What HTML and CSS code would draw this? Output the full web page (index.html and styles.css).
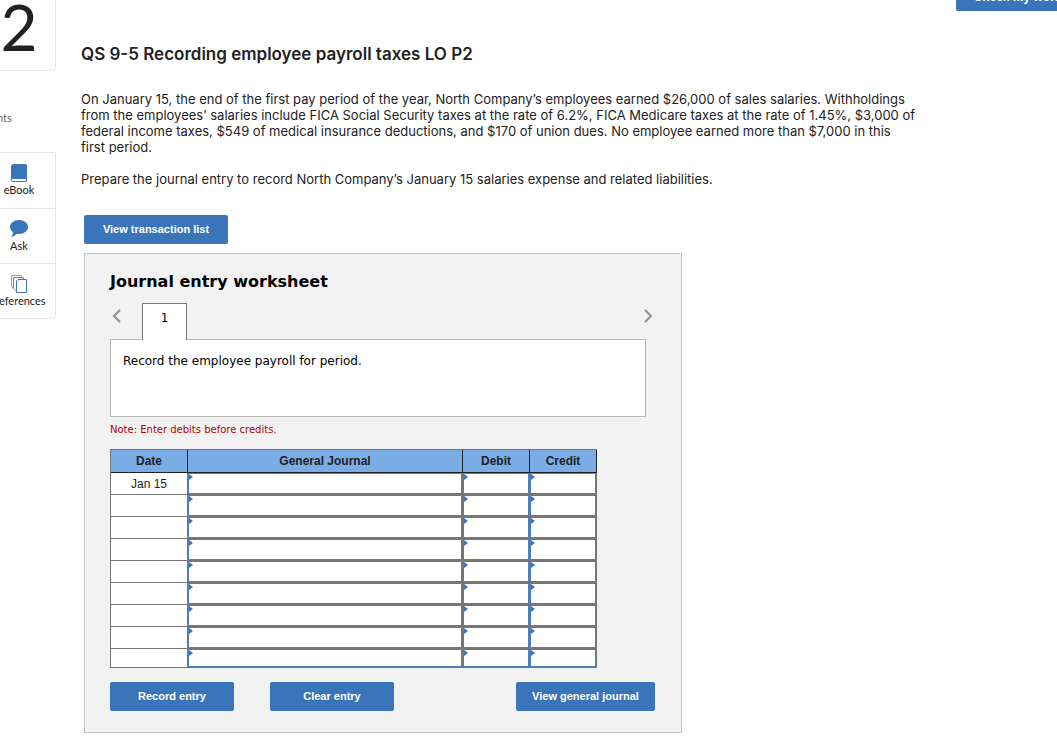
FILE: index.html
```html
<!DOCTYPE html>
<html lang="en">
<head>
    <meta charset="UTF-8">
    <meta name="viewport" content="width=device-width, initial-scale=1.0">
    <title>QS 9-5 Recording employee payroll taxes</title>
    <link rel="stylesheet" href="styles.css">
</head>
<body>
    <div class="page">
        <aside class="sidebar">
            <div class="question-number">2</div>
            <p class="points">points</p>
            <nav class="tools">
                <a href="#ebook">
                    <svg width="18" height="20" viewBox="0 0 18 20">
                        <path d="M4 1h11v14H3q-1 0-2 1V4q0-3 3-3z" fill="#3a75ba"/>
                        <path d="M16.500 2v16.500H3q-2 0-2-1.500t2-1.500h12.500V1" fill="none" stroke="#3a75ba"/>
                    </svg>
                    eBook
                </a>
                <a href="#ask">
                    <svg width="18" height="20" viewBox="0 0 18 20">
                        <path d="M9 1c5 0 9 3 9 7s-4 7-9 7q-1 0-2-.2Q4 18 1 18q2-1.500 2-4.700Q0 11 0 8c0-4 4-7 9-7z" fill="#3a75ba"/>
                    </svg>
                    Ask
                </a>
                <a href="#references">
                    <svg width="18" height="20" viewBox="0 0 18 20">
                        <g fill="#fff" stroke="#3a75ba">
                            <path d="M1.500 1.500h10v13h-8l-2-2z" stroke="#7ba3d3"/>
                            <path d="M3.500 3.500h10v13h-8l-2-2z" stroke="#5b8cc7"/>
                            <path d="M8 5.500h8.500v13h-10V7z"/>
                        </g>
                    </svg>
                    References
                </a>
            </nav>
        </aside>

        <main>
            <header>
                <button type="button" class="btn check-btn">Check my work</button>
            </header>

            <section class="question">
                <h1>QS 9-5 Recording employee payroll taxes LO P2</h1>
                <p>On January 15, the end of the first pay period of the year, North Company’s employees earned $26,000 of sales salaries. Withholdings<br>
                from the employees’ salaries include FICA Social Security taxes at the rate of 6.2%, FICA Medicare taxes at the rate of 1.45%, $3,000 of<br>
                federal income taxes, $549 of medical insurance deductions, and $170 of union dues. No employee earned more than $7,000 in this<br>
                first period.</p>
                <p>Prepare the journal entry to record North Company’s January 15 salaries expense and related liabilities.</p>
            </section>

            <button type="button" class="btn list-btn">View transaction list</button>

            <section class="worksheet">
                <h2>Journal entry worksheet</h2>
                <div class="tabs">
                    <button type="button" class="arrow" aria-label="Previous">
                        <svg width="10" height="14" viewBox="0 0 10 14"><path d="M8 1L2 7l6 6" fill="none" stroke="#8f8f8f" stroke-width="2"/></svg>
                    </button>
                    <button type="button" class="tab">1</button>
                    <button type="button" class="arrow next" aria-label="Next">
                        <svg width="10" height="14" viewBox="0 0 10 14"><path d="M2 1l6 6-6 6" fill="none" stroke="#8f8f8f" stroke-width="2"/></svg>
                    </button>
                </div>
                <div class="instruction">Record the employee payroll for period.</div>
                <p class="note">Note: Enter debits before credits.</p>

                <table class="journal">
                    <colgroup>
                        <col class="col-date">
                        <col>
                        <col class="col-amount">
                        <col class="col-amount">
                    </colgroup>
                    <thead>
                        <tr><th>Date</th><th>General Journal</th><th>Debit</th><th>Credit</th></tr>
                    </thead>
                    <tbody id="rows"></tbody>
                </table>

                <div class="actions">
                    <button type="button" class="btn">Record entry</button>
                    <button type="button" class="btn">Clear entry</button>
                    <button type="button" class="btn journal-btn">View general journal</button>
                </div>
            </section>
        </main>
    </div>

    <script>
        const dates = ['Jan 15', '', '', '', '', '', '', '', ''];
        const fields = ['General Journal', 'Debit', 'Credit'];

        document.getElementById('rows').innerHTML = dates.map((date, i) => {
            const cells = fields.map(f => `<td class="entry"><input type="text" aria-label="${f} row ${i + 1}"></td>`).join('');
            return `<tr><td>${date}</td>${cells}</tr>`;
        }).join('');
    </script>
</body>
</html>
```
FILE: styles.css
```css
* {
    box-sizing: border-box;
}

body {
    margin: 0;
    overflow: hidden;
    background-color: #fff;
    color: #222;
    font-family: Inter, "Open Sans", sans-serif;
}

/* the sheet is scrolled a little down and to the right */
.page {
    display: flex;
    margin: -18px -22px 0 -18px;
}

.sidebar {
    width: 74px;
    flex: none;
    text-align: center;
    font-family: Lato, sans-serif;
    font-size: 11px;
}

.question-number {
    height: 89px;
    border: 1px solid #e6e6e6;
    border-bottom-right-radius: 4px;
    font-size: 64px;
    line-height: 88px;
}

.points {
    margin: 39px 0 26px;
    text-align: left;
    line-height: 16px;
    color: #666;
}

.tools {
    border: 1px solid #e6e6e6;
    border-bottom-right-radius: 4px;
}

.tools a {
    display: flex;
    flex-direction: column;
    align-items: center;
    height: 55px;
    padding-top: 10px;
    color: #222;
    line-height: 14px;
    text-decoration: none;
}

.tools a + a {
    border-top: 1px solid #e6e6e6;
}

main {
    flex: 1;
    padding-left: 25px;
}

header {
    display: flex;
    justify-content: flex-end;
}

.btn {
    height: 29px;
    padding: 0 15px 2px;
    border: 0;
    border-radius: 2px;
    background-color: #3a75ba;
    color: #fff;
    font: bold 11px "Liberation Sans", Arial, sans-serif;
}

.check-btn {
    width: 123px;
    padding-bottom: 0;
    font-size: 12px;
}

.question h1 {
    margin: 32px 0 0;
    font-size: 17px;
    font-weight: 600;
    line-height: 22px;
}

.question p {
    margin: 0 0 16px;
    font-size: 13px;
    line-height: 16px;
    white-space: nowrap;
}

.question h1 + p {
    margin-top: 26px;
}

.list-btn {
    display: block;
    width: 144px;
    margin: 28px 3px 9px;
}

.worksheet {
    max-width: 598px;
    margin-left: 3px;
    padding: 17px 26px 21px 25px;
    border: 1px solid #c3c3c3;
    background-color: #f2f2f2;
}

.worksheet h2 {
    margin: 0;
    color: #000;
    font: bold 16px/22px "DejaVu Sans", Verdana, sans-serif;
}

.tabs {
    display: flex;
    align-items: flex-start;
    margin-top: 10px;
}

.arrow {
    width: 14px;
    height: 28px;
    padding: 0;
    border: 0;
    background: none;
}

.next {
    margin-left: auto;
}

.tab {
    width: 45px;
    height: 37px;
    margin: 0 0 -1px 18px;
    padding-bottom: 9px;
    border: 1px solid #777;
    border-bottom: 0;
    background-color: #fff;
    font: 12px "DejaVu Sans", Verdana, sans-serif;
    z-index: 1;
}

.instruction {
    height: 78px;
    margin-right: 9px;
    padding: 13px 12px;
    border: 1px solid #b5b5b5;
    background-color: #fff;
    color: #000;
    font: 12px/16px "DejaVu Sans", Verdana, sans-serif;
}

.note {
    margin: 5px 0 12px;
    color: #b30000;
    font: 10px/15px "DejaVu Sans", Verdana, sans-serif;
}

.journal {
    width: 100%;
    max-width: 487px;
    table-layout: fixed;
    border: 1px solid #757575;
    border-width: 1px 0 0 1px;
    border-spacing: 0;
    background-color: #fff;
    font: 12px "Liberation Sans", Arial, sans-serif;
    text-align: center;
}

.col-date {
    width: 77px;
}

.col-amount {
    width: 67px;
}

.journal th {
    height: 23px;
    padding: 0;
    border: 1px solid #222;
    border-width: 0 1px 1px 0;
    background-color: #7aace6;
    font-weight: bold;
}

.journal td {
    height: 22px;
    padding: 0;
    border: 1px solid #757575;
    border-width: 0 1px 1px 0;
}

.journal tr:last-child td {
    height: 19px;
}

/* small blue marker in the corner of every editable cell */
.journal .entry {
    position: relative;
}

.entry::before {
    content: "";
    position: absolute;
    top: 1px;
    left: 1px;
    border: 3px solid transparent;
    border-left: 4px solid #3a75ba;
    border-right: 0;
}

.entry input {
    display: block;
    width: 100%;
    height: 21px;
    padding: 0 4px;
    border: 1px solid #4d80bd;
    background: #fff;
    font: inherit;
}

.journal tr:last-child input {
    height: 18px;
}

.actions {
    display: flex;
    gap: 36px;
    margin-top: 14px;
}

.actions .btn {
    width: 124px;
}

.actions .journal-btn {
    width: 139px;
    margin-left: auto;
}
```
